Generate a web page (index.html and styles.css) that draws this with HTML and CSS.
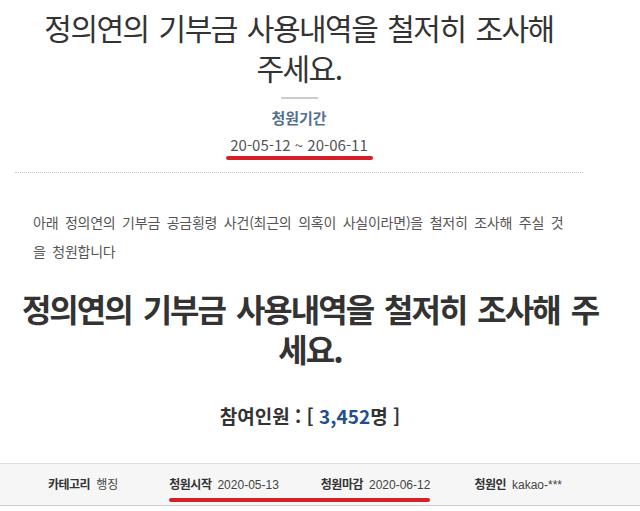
FILE: index.html
```html
<!DOCTYPE html>
<html lang="ko">
<head>
    <meta charset="UTF-8">
    <meta name="viewport" content="width=device-width, initial-scale=1.0">
    <title>청원 - 정의연의 기부금 사용내역을 철저히 조사해 주세요.</title>
    <link rel="stylesheet" href="styles.css">
</head>
<body>
    <div class="head">
        <h2 class="head-title">정의연의 기부금 사용내역을 철저히 조사해<br>주세요.</h2>
        <div class="head-rule"></div>

        <div class="period">
            <div class="period-label">청원기간</div>
            <div class="period-date">20-05-12 ~ 20-06-11</div>
            <div class="mark-period"></div>
        </div>

        <div class="dots"></div>

        <p class="summary">아래 정의연의 기부금 공금횡령 사건(최근의 의혹이 사실이라면)을 철저히 조사해 주실 것<br>을 청원합니다</p>
    </div>

    <div class="content">
        <h1 class="big-title">정의연의 기부금 사용내역을 철저히 조사해 주<br>세요.</h1>
        <div class="count">참여인원 : [ <span class="count-num">3,452</span>명 ]</div>
    </div>

    <div class="info-bar">
        <div class="info-item info-category">
            <span class="info-label">카테고리</span>
            <span class="info-value">행징</span>
        </div>
        <div class="info-group">
            <div class="info-item">
                <span class="info-label">청원시작</span>
                <span class="info-value">2020-05-13</span>
            </div>
            <div class="info-item">
                <span class="info-label">청원마감</span>
                <span class="info-value">2020-06-12</span>
            </div>
            <div class="mark-bar"></div>
        </div>
        <div class="info-item">
            <span class="info-label">청원인</span>
            <span class="info-value">kakao-***</span>
        </div>
    </div>
</body>
</html>
```

FILE: styles.css
```css
body 
{
    margin: 0;
    background-color: #fff;
    font-family: "Noto Sans CJK KR", "Liberation Sans", sans-serif;
    color: #333;
}
.head 
{
    width: 568px;
    margin-left: 15px;
    text-align: center;
}
.head-title 
{
    margin: 7px 0 0;
    font-size: 30px;
    font-weight: normal;
    line-height: 40px;
    letter-spacing: -1.5px;
    word-spacing: 3px;
    color: #333;
}
.head-rule 
{
    width: 37px;
    height: 2px;
    margin: 10px auto 0;
    background-color: #ccc;
}
.period 
{
    margin-top: 9px;
}
.period-label 
{
    font-size: 15px;
    font-weight: bold;
    line-height: 20px;
    color: #536f8e;
}
.period-date 
{
    margin-top: 6px;
    font-size: 15px;
    line-height: 22px;
    color: #555;
}
.mark-period 
{
    width: 147px;
    height: 4px;
    margin: 0 auto;
    border-radius: 2px;
    background-color: #d61f26;
}
.dots 
{
    margin-top: 12px;
    border-top: 1px dotted #c8c8c8;
}
.summary 
{
    margin: 35px 0 0;
    padding-left: 18px;
    text-align: left;
    font-size: 14px;
    line-height: 29px;
    letter-spacing: -0.25px;
    word-spacing: 3px;
    color: #555;
}
.content 
{
    width: 620px;
    text-align: center;
}
.big-title 
{
    margin: 22px 0 0;
    font-size: 32px;
    font-weight: bold;
    line-height: 40px;
    letter-spacing: -2px;
    word-spacing: 4px;
    color: #333;
}
.count 
{
    margin-top: 36px;
    font-size: 19px;
    font-weight: bold;
    line-height: 24px;
    color: #333;
}
.count-num 
{
    color: #1f4f8f;
}
.info-bar 
{
    display: flex;
    align-items: center;
    gap: 44px;
    height: 41px;
    margin-top: 35px;
    padding-left: 48px;
    background-color: #f6f6f6;
    border-top: 1px solid #ddd;
    border-bottom: 1px solid #ccc;
}
.info-group 
{
    position: relative;
    display: flex;
    gap: 42px;
}
.info-item 
{
    display: flex;
    align-items: baseline;
    gap: 6px;
    line-height: 18px;
}
.info-category 
{
    margin-right: 7px;
}
.info-label 
{
    font-size: 12px;
    font-weight: bold;
    letter-spacing: -0.5px;
    color: #333;
}
.info-value 
{
    font-family: "Liberation Sans", "Noto Sans CJK KR", sans-serif;
    font-size: 12px;
    color: #444;
}
.mark-bar 
{
    position: absolute;
    left: 0;
    right: 0;
    top: calc(100% + 4px);
    height: 4px;
    border-radius: 2px;
    background-color: #d61f26;
}
```
